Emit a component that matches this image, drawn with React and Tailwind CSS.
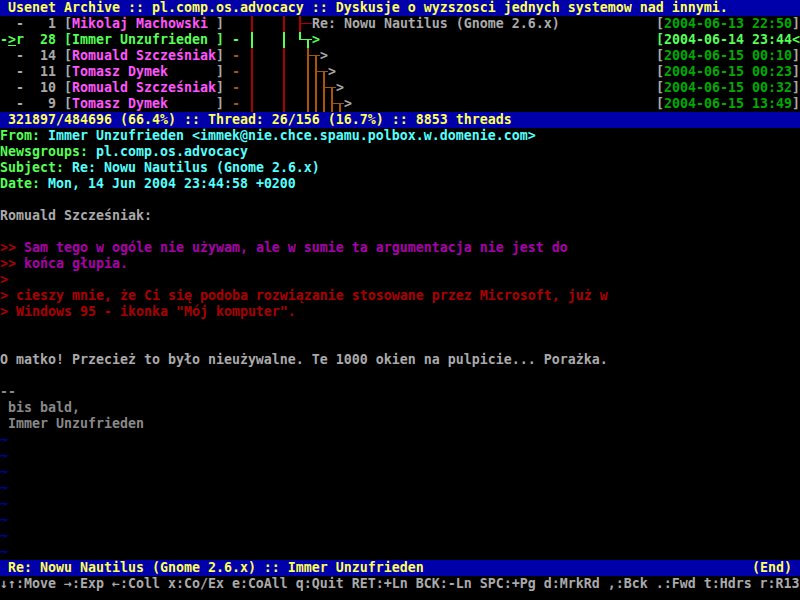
import React from 'react'

const threads = [
  { cur: false, flag: '-', num: 1, name: 'Mikolaj Machowski', dash: false, date: '2004-06-13 22:50' },
  { cur: true, flag: 'r', num: 28, name: 'Immer Unzufrieden', dash: true, date: '2004-06-14 23:44' },
  { cur: false, flag: '-', num: 14, name: 'Romuald Szcześniak', dash: true, date: '2004-06-15 00:10' },
  { cur: false, flag: '-', num: 11, name: 'Tomasz Dymek', dash: true, date: '2004-06-15 00:23' },
  { cur: false, flag: '-', num: 10, name: 'Romuald Szcześniak', dash: true, date: '2004-06-15 00:32' },
  { cur: false, flag: '-', num: 9, name: 'Tomasz Dymek', dash: true, date: '2004-06-15 13:49' },
]

const RED = '#aa0000'
const GREEN = '#55ff55'
const ORANGE = '#aa5500'

// thread tree for one row, starting at column 31
function Tree({ i }) {
  const rail = i === 1 ? GREEN : RED
  const width = i < 2 ? 64 : 72 + 8 * (i - 2)
  const parts = []
  if (i === 0) {
    parts.push(<rect key="a" x="51" y="0" width="2" height="16" fill={RED} />)
    parts.push(<rect key="b" x="53" y="7" width="11" height="1" fill={RED} />)
  } else if (i === 1) {
    parts.push(<rect key="a" x="51" y="0" width="2" height="8" fill={GREEN} />)
    parts.push(<rect key="b" x="51" y="7" width="13" height="1" fill={GREEN} />)
    parts.push(<rect key="c" x="59" y="7" width="2" height="9" fill={GREEN} />)
  } else {
    const d = i - 2
    for (let j = 0; j <= d; j++) {
      parts.push(<rect key={'v' + j} x={59 + 8 * j} y="0" width="2" height="16" fill={ORANGE} />)
    }
    parts.push(<rect key="h" x={60 + 8 * d} y="7" width="12" height="1" fill={ORANGE} />)
    parts.push(<rect key="dn" x={67 + 8 * d} y="7" width="2" height="9" fill={ORANGE} />)
  }
  return (
    <svg width={width} height="16" className="shrink-0">
      <rect x="3" y="0" width="2" height="16" fill={rail} />
      <rect x="35" y="0" width="2" height="16" fill={rail} />
      {parts}
    </svg>
  )
}

function ThreadRow({ t, i }) {
  const g = t.cur
  const base = g ? 'text-[#55ff55]' : 'text-[#aaaaaa]'
  return (
    <div className="flex h-4 whitespace-pre">
      <span className="text-[#55ff55]">{g ? '-' : ' '}</span>
      <span className={g ? 'text-[#55ff55] underline' : ''}>{g ? '>' : ' '}</span>
      <span className={base}>{t.flag + ' ' + String(t.num).padStart(3) + ' ['}</span>
      <span className={g ? 'text-[#55ff55]' : 'text-[#ff55ff]'}>{t.name.padEnd(18)}</span>
      <span className={base}>{'] '}</span>
      <span className={g ? 'text-[#55ff55]' : 'text-[#aa5500]'}>{t.dash ? '-' : ' '}</span>
      <span> </span>
      <Tree i={i} />
      {i === 0 ? (
        <span className="text-[#aaaaaa]">Re: Nowu Nautilus (Gnome 2.6.x)</span>
      ) : (
        <span className={g ? 'text-[#55ff55]' : 'text-[#aaaaaa]'}>&gt;</span>
      )}
      <span className="flex-1" />
      <span className={g ? 'text-[#55ff55]' : 'text-[#aaaaaa]'}>[</span>
      <span className={g ? 'text-[#55ff55]' : 'text-[#00aa00]'}>{t.date}</span>
      <span className={g ? 'text-[#55ff55]' : 'text-[#aaaaaa]'}>{g ? '<' : ']'}</span>
    </div>
  )
}

function Header({ label, value }) {
  return (
    <div className="h-4 whitespace-pre">
      <span className="text-[#55ff55]">{label}: </span>
      <span className="text-[#55ffff]">{value}</span>
    </div>
  )
}

export default function App() {
  return (
    <div className="min-h-screen w-[800px] bg-black font-['DejaVu_Sans_Mono',monospace] text-[13.29px] leading-4 font-bold text-[#aaaaaa] overflow-hidden">
      {/* title */}
      <div className="h-4 bg-[#0000aa] text-[#ffff55] whitespace-pre">
        {' Usenet Archive :: pl.comp.os.advocacy :: Dyskusje o wyzszosci jednych systemow nad innymi.'}
      </div>

      {/* thread list */}
      {threads.map((t, i) => (
        <ThreadRow key={i} t={t} i={i} />
      ))}

      <div className="h-4 bg-[#0000aa] text-[#ffff55] whitespace-pre">
        {' 321897/484696 (66.4%) :: Thread: 26/156 (16.7%) :: 8853 threads'}
      </div>

      {/* article */}
      <Header label="From" value="Immer Unzufrieden <immek@nie.chce.spamu.polbox.w.domenie.com>" />
      <Header label="Newsgroups" value="pl.comp.os.advocacy" />
      <Header label="Subject" value="Re: Nowu Nautilus (Gnome 2.6.x)" />
      <Header label="Date" value="Mon, 14 Jun 2004 23:44:58 +0200" />
      <div className="h-4" />
      <div className="h-4 whitespace-pre">Romuald Szcześniak:</div>
      <div className="h-4" />
      <div className="h-4 whitespace-pre">
        <span className="text-[#aa0000]">&gt;&gt;</span>
        <span className="text-[#aa00aa]"> Sam tego w ogóle nie używam, ale w sumie ta argumentacja nie jest do</span>
      </div>
      <div className="h-4 whitespace-pre">
        <span className="text-[#aa0000]">&gt;&gt;</span>
        <span className="text-[#aa00aa]"> końca głupia.</span>
      </div>
      <div className="h-4 whitespace-pre text-[#aa0000]">&gt;</div>
      <div className="h-4 whitespace-pre text-[#aa0000]">
        {'> cieszy mnie, że Ci się podoba rozwiązanie stosowane przez Microsoft, już w'}
      </div>
      <div className="h-4 whitespace-pre text-[#aa0000]">{'> Windows 95 - ikonka "Mój komputer".'}</div>
      <div className="h-4" />
      <div className="h-4" />
      <div className="h-4 whitespace-pre">
        O matko! Przecież to było nieużywalne. Te 1000 okien na pulpicie... Porażka.
      </div>
      <div className="h-4" />
      <div className="h-4 whitespace-pre text-[#888888]">-- </div>
      <div className="h-4 whitespace-pre text-[#888888]"> bis bald,</div>
      <div className="h-4 whitespace-pre text-[#888888]"> Immer Unzufrieden</div>
      {Array.from({ length: 8 }).map((_, i) => (
        <div key={i} className="h-4 text-[#0000aa]">~</div>
      ))}

      {/* status */}
      <div className="flex h-4 bg-[#0000aa] text-[#ffff55] whitespace-pre">
        <span>{' Re: Nowu Nautilus (Gnome 2.6.x) :: Immer Unzufrieden'}</span>
        <span className="flex-1" />
        <span>{'(End) '}</span>
      </div>
      <div className="h-4 whitespace-pre">
        ↓↑:Move →:Exp ←:Coll x:Co/Ex e:CoAll q:Quit RET:+Ln BCK:-Ln SPC:+Pg d:MrkRd ,:Bck .:Fwd t:Hdrs r:R13
      </div>
    </div>
  )
}
